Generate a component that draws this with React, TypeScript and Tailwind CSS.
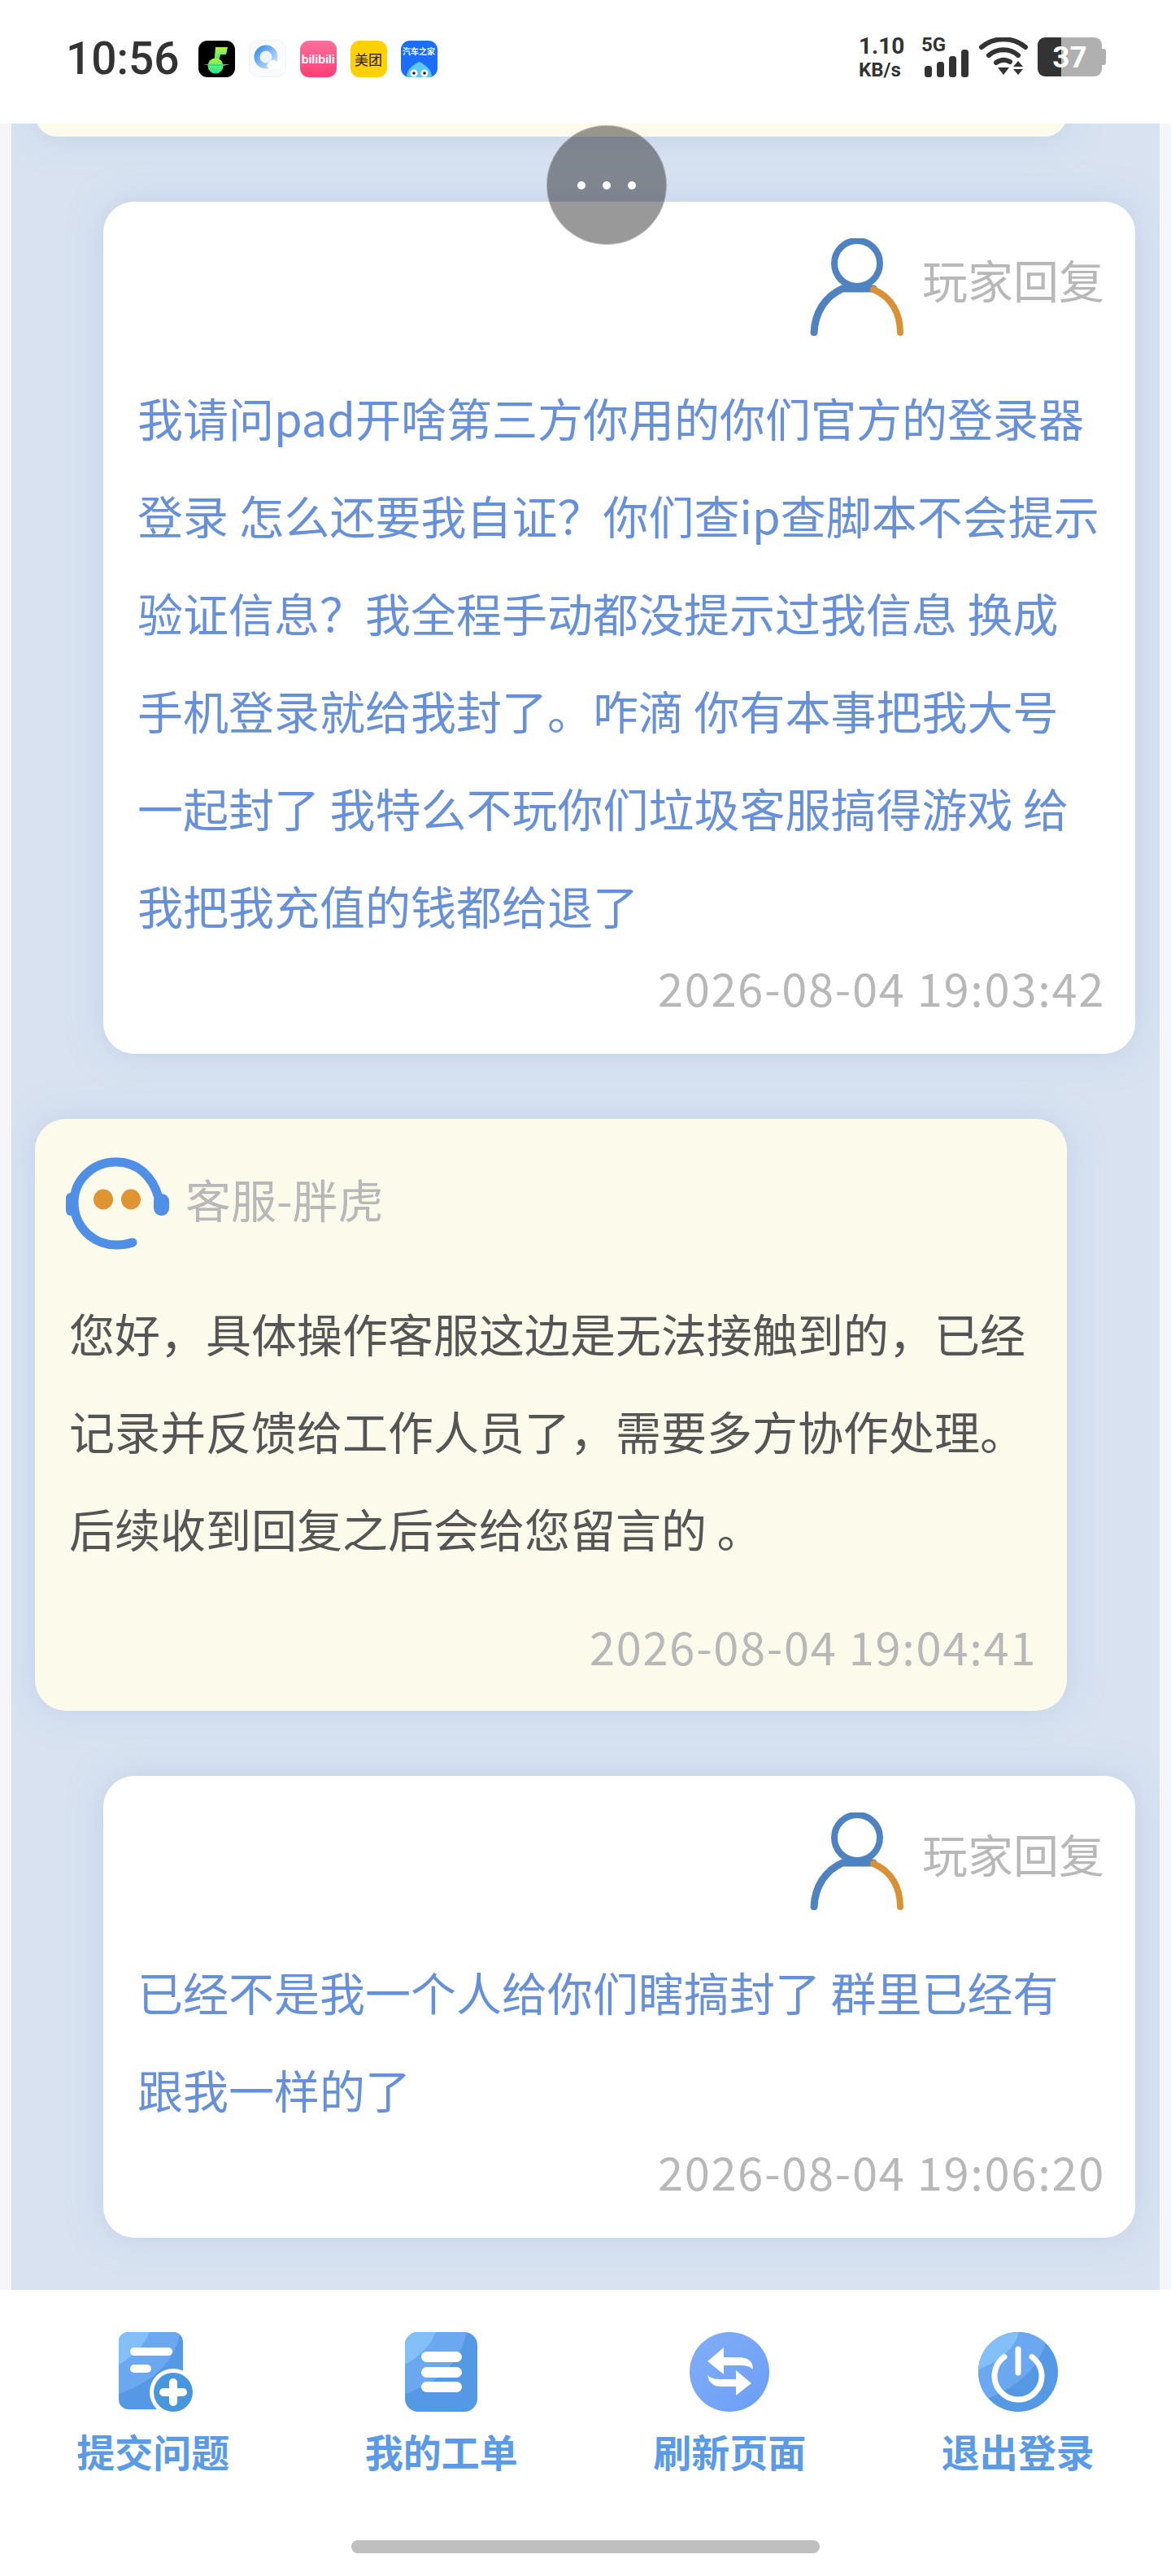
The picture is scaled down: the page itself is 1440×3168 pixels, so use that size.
import React from 'react';

const cjk = "font-['Noto_Sans_CJK_SC','Noto_Sans',sans-serif]";

const StatusApps = () => (
  <div className="flex items-center gap-[17px] ml-[23px]">
    {/* music */}
    <svg width="45" height="45" viewBox="0 0 45 45">
      <defs>
        <linearGradient id="mus" x1="0" y1="0" x2="0" y2="1">
          <stop offset="0" stopColor="#b6f03a" />
          <stop offset="1" stopColor="#16e6a0" />
        </linearGradient>
      </defs>
      <rect width="45" height="45" rx="11" fill="#000" />
      <path d="M21 8h15l-2 9h-7l-3 13h-5z" fill="url(#mus)" />
      <circle cx="21" cy="31" r="9.500" fill="url(#mus)" />
      <path d="M6 29h33l-9 2h-15z" fill="#19e88c" />
    </svg>
    {/* qq browser */}
    <svg width="46" height="46" viewBox="0 0 46 46">
      <defs>
        <linearGradient id="qb" x1="0" y1="0" x2="1" y2="1">
          <stop offset="0" stopColor="#3f8fe8" />
          <stop offset="1" stopColor="#c9e2fa" />
        </linearGradient>
      </defs>
      <rect x="0.5" y="0.5" width="45" height="45" rx="11" fill="#f9fbfe" stroke="#eef2f8" />
      <circle cx="21" cy="21" r="11" fill="#eef3fa" stroke="url(#qb)" strokeWidth="7" />
      <path d="M24 35a4 4 0 0 1 1-7 5 5 0 0 1 9-1 4 4 0 0 1 2 8z" fill="#fff" />
    </svg>
    {/* bilibili */}
    <div className="w-[45px] h-[45px] rounded-[11px] bg-[linear-gradient(180deg,#fb6f9b,#fd4076)] flex items-center justify-center">
      <span className="text-white text-[15px] leading-none font-bold tracking-[-0.3px] font-['Liberation_Sans',sans-serif]">bilibili</span>
    </div>
    {/* meituan */}
    <div className={`w-[45px] h-[45px] rounded-[11px] bg-[#ffd100] flex items-center justify-center text-[#2a2000] text-[17px] leading-none ${cjk}`}>
      美团
    </div>
    {/* autohome */}
    <div className="w-[45px] h-[45px] rounded-[11px] bg-[#1c6dfb] overflow-hidden flex flex-col items-center relative">
      <span className={`text-white text-[10px] leading-none font-bold mt-[8px] whitespace-nowrap ${cjk}`}>汽车之家</span>
      <svg width="45" height="24" viewBox="0 0 45 24" className="absolute left-0 bottom-0">
        <path d="M7 24c0-9 7-15 15.500-19C31 9 38 15 38 24z" fill="#5cc8f5" />
        <circle cx="16" cy="19" r="4.500" fill="#fff" />
        <circle cx="29" cy="19" r="4.500" fill="#fff" />
        <circle cx="16" cy="19" r="1.800" fill="#123" />
        <circle cx="29" cy="19" r="1.800" fill="#123" />
      </svg>
    </div>
  </div>
);

const StatusRight = () => (
  <div className="flex items-start font-['Roboto',sans-serif] text-[#333] mr-[80px]">
    <div className="w-[77px] mt-[-4px] font-bold">
      <div className="text-[28px] leading-[29px]">1.10</div>
      <div className="text-[24px] leading-[24px] mt-[3px]">KB/s</div>
    </div>
    <div className="w-[71px] relative h-[50px]">
      <div className="text-[24px] leading-[24px] font-bold mt-[-3px]">5G</div>
      <svg width="54" height="34" viewBox="0 0 54 34" className="absolute left-[4px] top-[15px]">
        <rect x="0" y="20" width="9" height="14" rx="3.500" fill="#333" />
        <rect x="15" y="15" width="9" height="19" rx="3.500" fill="#333" />
        <rect x="30" y="8" width="9" height="26" rx="3.500" fill="#333" />
        <rect x="45" y="0" width="9" height="34" rx="3.500" fill="#333" />
      </svg>
    </div>
    <svg width="60" height="48" viewBox="0 0 60 48">
      <path d="M3 12C18-1 42-1 57 12" fill="none" stroke="#333" strokeWidth="6" strokeLinecap="round" />
      <path d="M12 22C22 13 38 13 48 22" fill="none" stroke="#333" strokeWidth="6" strokeLinecap="round" />
      <path d="M21 31c6-4 12-4 17-1" fill="none" stroke="#333" strokeWidth="6" strokeLinecap="round" />
      <path d="M23 37h14l-7 9z" fill="#333" />
      <path d="M48 29l6 7H42zM42 39h12l-6 7z" fill="#333" />
    </svg>
    <div className="ml-[12px] w-[79px] h-[48px] rounded-[9px] bg-[linear-gradient(90deg,#333_29px,#b0b0b0_29px)] flex items-center justify-center text-white text-[37px] leading-none font-bold flex-none">
      37
    </div>
    <div className="w-[5px] h-[20px] mt-[14px] bg-[#b0b0b0] rounded-r-[3px]" />
  </div>
);

const PlayerAvatar = () => (
  <svg width="118" height="120" viewBox="0 0 118 120">
    <circle cx="58" cy="31" r="28" fill="none" stroke="#4f82c0" strokeWidth="8" />
    <path d="M5 116C6 92 18 72 40 62H78" fill="none" stroke="#4f82c0" strokeWidth="9" strokeLinecap="round" />
    <path d="M78 63C100 72 111 92 111 116" fill="none" stroke="#d89135" strokeWidth="8" strokeLinecap="round" />
  </svg>
);

const ServiceAvatar = () => (
  <svg width="127" height="114" viewBox="0 0 127 114" className="ml-[-2px]">
    <path d="M82 105C76 107 70 108 62 108C33 108 10 85 10 56C10 28 33 6 62 6C88 6 107 24 114 50" fill="none" stroke="#4f8fe6" strokeWidth="11" strokeLinecap="round" />
    <rect x="0" y="44" width="14" height="28" rx="6" fill="#4f8fe6" />
    <rect x="108" y="45" width="19" height="27" rx="9" fill="#4f8fe6" />
    <ellipse cx="46" cy="52" rx="12" ry="12.500" fill="#df9434" />
    <ellipse cx="80" cy="52" rx="12" ry="12.500" fill="#df9434" />
  </svg>
);

const PlayerCard = ({ lines, time }: { lines: string[]; time: string }) => (
  <div className="ml-[113px] mr-[30px] rounded-[38px] bg-white px-[40px] pt-[45px] pb-[45px] shadow-[0_0_40px_rgba(176,196,226,0.55)]">
    <div className="flex items-center justify-end h-[120px] gap-[20px]">
      <PlayerAvatar />
      <span className="text-[56px] leading-[120px] text-[#b8b8b8] mt-[-20px] mr-[-2px]">玩家回复</span>
    </div>
    <div className="mt-[40px] mb-[4px] ml-[2px] text-[56px] leading-[120px] text-[#6690d9] whitespace-nowrap">
      {lines.map(l => (
        <div key={l}>{l}</div>
      ))}
    </div>
    <div className="text-right text-[56px] leading-[74px] text-[#b8b8b8] tracking-[1.7px] mr-[-3px]">{time}</div>
  </div>
);

const ServiceCard = ({ lines, time }: { lines: string[]; time: string }) => (
  <div className="ml-[29px] w-[1269px] rounded-[38px] bg-[#fcfaeb] px-[40px] pt-[47px] pb-[43px] shadow-[0_0_40px_rgba(176,196,226,0.55)]">
    <div className="flex items-center h-[114px] gap-[20px]">
      <ServiceAvatar />
      <span className="text-[56px] leading-[114px] text-[#b8b8b8] mt-[-12px]">客服-胖虎</span>
    </div>
    <div className="mt-[42px] ml-[2px] text-[56px] leading-[120px] text-[#555] whitespace-nowrap">
      {lines.map(l => (
        <div key={l}>{l}</div>
      ))}
    </div>
    <div className="text-right text-[56px] leading-[74px] text-[#b8b8b8] tracking-[1.7px] mt-[48px] mr-[-3px]">{time}</div>
  </div>
);

const Shade = ({ cid }: { cid: string }) => (
  <g clipPath={`url(#${cid})`}>
    <path d="M0 0H76C68 36 46 60 0 76z" fill="#6ca8f0" />
    <path d="M0 0H38C30 18 18 30 0 40z" fill="#84c0f8" />
  </g>
);

const NewIcon = () => (
  <svg width="94" height="98" viewBox="0 0 94 98" className="ml-[10px]">
    <defs>
      <clipPath id="docA">
        <rect width="79" height="95" rx="12" />
      </clipPath>
    </defs>
    <rect width="79" height="95" rx="12" fill="#5598e4" />
    <Shade cid="docA" />
    <rect x="14" y="19" width="52" height="10" rx="5" fill="#fff" />
    <rect x="14" y="40" width="26" height="10" rx="5" fill="#fff" />
    <circle cx="67" cy="74" r="29" fill="#fff" />
    <circle cx="67" cy="74" r="24" fill="#4896de" />
    <path d="M67 62V86M55 74H79" fill="none" stroke="#fff" strokeWidth="10" strokeLinecap="round" />
  </svg>
);

const ListIcon = () => (
  <svg width="89" height="98" viewBox="0 0 89 98">
    <defs>
      <clipPath id="docB">
        <rect width="89" height="98" rx="16" />
      </clipPath>
    </defs>
    <rect width="89" height="98" rx="16" fill="#5598e4" />
    <Shade cid="docB" />
    <rect x="20" y="24" width="50" height="13" rx="6.500" fill="#fff" />
    <rect x="20" y="43" width="50" height="13" rx="6.500" fill="#fff" />
    <rect x="20" y="61" width="50" height="13" rx="6.500" fill="#fff" />
  </svg>
);

const SwapIcon = () => (
  <svg width="98" height="98" viewBox="0 0 98 98">
    <defs>
      <linearGradient id="sw" x1="0" y1="0" x2="1" y2="1">
        <stop offset="0" stopColor="#82aef8" />
        <stop offset="1" stopColor="#6a9ef6" />
      </linearGradient>
    </defs>
    <circle cx="49" cy="49" r="49" fill="url(#sw)" />
    <path d="M42 19L22 36L42 52V41H62C70 41 76 43 78 46C78 36 72 31 60 31H42Z" fill="#fff" />
    <path d="M57 47L76 63L57 78V67H38C30 67 24 63 22 53C26 57 31 58 40 58H57Z" fill="#fff" />
  </svg>
);

const PowerIcon = () => (
  <svg width="98" height="98" viewBox="0 0 98 98">
    <defs>
      <clipPath id="pwc">
        <circle cx="49" cy="49" r="49" />
      </clipPath>
    </defs>
    <circle cx="49" cy="49" r="49" fill="#5598e4" />
    <g clipPath="url(#pwc)">
      <path d="M0 0H86C80 40 50 70 0 86z" fill="#6ca8f0" />
      <path d="M0 0H50C44 22 26 36 0 46z" fill="#84c0f8" />
    </g>
    <path d="M32 30.500A29 29 0 1 0 66 30.500" fill="none" stroke="#fff" strokeWidth="7" strokeLinecap="round" />
    <path d="M49 21V50" fill="none" stroke="#fff" strokeWidth="7" strokeLinecap="round" />
  </svg>
);

const tabs = [
  { label: '提交问题', icon: <NewIcon /> },
  { label: '我的工单', icon: <ListIcon /> },
  { label: '刷新页面', icon: <SwapIcon /> },
  { label: '退出登录', icon: <PowerIcon /> },
];

export default function App() {
  return (
    <div className={`relative w-[1440px] h-[3168px] overflow-hidden flex flex-col bg-white ${cjk}`}>
      <div className="h-[152px] flex-none flex items-center justify-between pb-[8px]">
        <div className="flex items-center pl-[81px]">
          <span className="text-[55px] leading-none font-medium text-[#333] font-['Roboto',sans-serif]">10:56</span>
          <StatusApps />
        </div>
        <StatusRight />
      </div>

      <div className="h-[2664px] flex-none bg-[#f4f6fb] px-[14px] overflow-hidden">
        <div className="h-full bg-[#d8e2f1] overflow-hidden">
          <div className="mt-[-38px] ml-[29px] w-[1269px] h-[54px] rounded-[38px] bg-[#fcfaeb] shadow-[0_0_40px_rgba(176,196,226,0.55)]" />
          <div className="mt-[80px]">
            <PlayerCard
              lines={[
                '我请问pad开啥第三方你用的你们官方的登录器',
                '登录 怎么还要我自证？你们查ip查脚本不会提示',
                '验证信息？我全程手动都没提示过我信息 换成',
                '手机登录就给我封了。咋滴 你有本事把我大号',
                '一起封了 我特么不玩你们垃圾客服搞得游戏 给',
                '我把我充值的钱都给退了',
              ]}
              time="2026-08-04 19:03:42"
            />
          </div>
          <div className="mt-[80px]">
            <ServiceCard
              lines={[
                '您好，具体操作客服这边是无法接触到的，已经',
                '记录并反馈给工作人员了，需要多方协作处理。',
                '后续收到回复之后会给您留言的 。',
              ]}
              time="2026-08-04 19:04:41"
            />
          </div>
          <div className="mt-[80px]">
            <PlayerCard
              lines={['已经不是我一个人给你们瞎搞封了 群里已经有', '跟我一样的了']}
              time="2026-08-04 19:06:20"
            />
          </div>
        </div>
      </div>

      <div className="flex-1 relative">
        <div className="grid grid-cols-4 px-[11px] pt-[52px]">
          {tabs.map(t => (
            <div key={t.label} className="flex flex-col items-center">
              <div className="h-[98px] flex items-center justify-center">{t.icon}</div>
              <div className="mt-[18px] text-[47px] leading-[60px] font-bold text-[#5b9ae6]">{t.label}</div>
            </div>
          ))}
        </div>
        <div className="absolute left-[432px] top-[308px] w-[576px] h-[16px] rounded-full bg-[#bfbfbf]" />
      </div>

      {/* floating menu button */}
      <div className="absolute left-[672px] top-[154px] w-[148px] h-[147px] rounded-full bg-black/40 border border-white/30 flex items-center justify-center gap-[21px]">
        <span className="w-[10px] h-[10px] rounded-full bg-white" />
        <span className="w-[10px] h-[10px] rounded-full bg-white" />
        <span className="w-[10px] h-[10px] rounded-full bg-white" />
      </div>
    </div>
  );
}
